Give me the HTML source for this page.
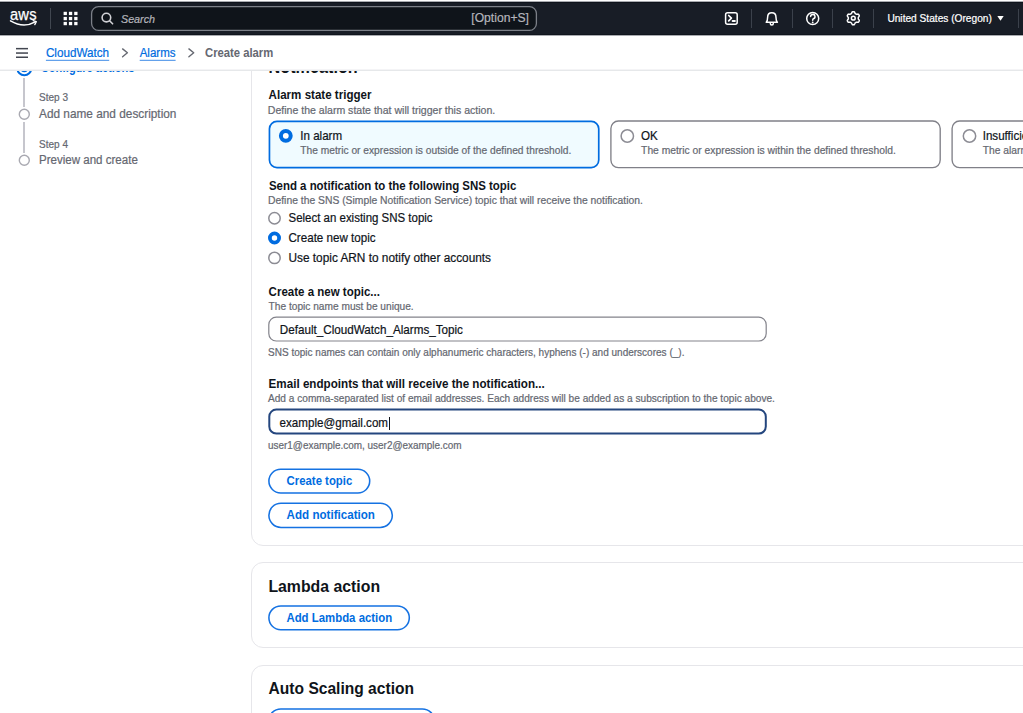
<!DOCTYPE html>
<html><head><meta charset="utf-8">
<style>
html,body{margin:0;padding:0;}
body{width:1023px;height:713px;overflow:hidden;position:relative;background:#fff;font-family:"Liberation Sans",sans-serif;}
.a{position:absolute;box-sizing:border-box;}
.t{position:absolute;white-space:pre;}
#nav{position:absolute;left:0;top:1px;width:1023px;height:35px;background:#181d26;
 box-shadow: inset 0 1px 0 #a9abb0, inset 0 2px 0 #0e131b, inset 0 -1px 0 #a9abb0, inset 0 -2px 0 #10151d;}
.sep{position:absolute;width:1px;background:#3b414b;}
.radio{position:absolute;box-sizing:border-box;border-radius:50%;}
.btn{position:absolute;box-sizing:border-box;border:1.6px solid #006ce0;border-radius:20px;}
.cont{position:absolute;box-sizing:border-box;border:1px solid #e6e6ea;border-radius:12px;background:#fff;}
.step-line{position:absolute;width:2px;background:#c6c6cd;}
</style></head><body>

<!-- containers -->
<div class="cont" style="left:251px;top:20px;width:900px;height:526px;"></div>
<div class="cont" style="left:251px;top:562px;width:900px;height:86px;"></div>
<div class="cont" style="left:251px;top:665px;width:900px;height:200px;"></div>

<!-- tiles -->
<svg style="position:absolute;left:0;top:0" width="1023" height="713" viewBox="0 0 1023 713">
 <rect x="269.45" y="121.35" width="329.3" height="46.2" rx="7.5" fill="#f0fbff" stroke="#006ce0" stroke-width="1.7"/>
 <rect x="610.9" y="121" width="329.3" height="46.6" rx="7.5" fill="none" stroke="#808088" stroke-width="1.35"/>
 <rect x="952.1" y="121" width="329.3" height="46.6" rx="7.5" fill="none" stroke="#808088" stroke-width="1.35"/>
</svg>



<!-- inputs -->
<svg style="position:absolute;left:0;top:0" width="1023" height="713" viewBox="0 0 1023 713">
 <rect x="268.8" y="317.2" width="497.4" height="23.8" rx="7.5" fill="none" stroke="#83838b" stroke-width="1.2"/>
 <rect x="269.3" y="409.6" width="496.5" height="24" rx="7" fill="none" stroke="#24467e" stroke-width="2"/>
 <rect x="389" y="417" width="1" height="13" fill="#0f141a"/>
</svg>

<!-- buttons -->
<svg style="position:absolute;left:0;top:0" width="1023" height="713" viewBox="0 0 1023 713">
 <g fill="none" stroke="#1572e2" stroke-width="1.55">
  <rect x="268.9" y="469.3" width="100.8" height="23.6" rx="11.8"/>
  <rect x="268.9" y="503.2" width="123.4" height="24.2" rx="12.1"/>
  <rect x="268.9" y="605.9" width="140.4" height="23.8" rx="11.9"/>
  <rect x="268.9" y="708.9" width="165.4" height="23.8" rx="11.9"/>
 </g>
</svg>

<!-- left nav steps -->
<svg style="position:absolute;left:0;top:0" width="1023" height="713" viewBox="0 0 1023 713">
 <!-- tile radios -->
 <circle cx="285.8" cy="135.8" r="4.9" fill="#fff" stroke="#006ce0" stroke-width="4"/>
 <circle cx="627.3" cy="136" r="6.2" fill="none" stroke="#8c8c94" stroke-width="1.5"/>
 <circle cx="969.5" cy="136" r="6.2" fill="none" stroke="#8c8c94" stroke-width="1.5"/>
 <!-- sns radios -->
 <circle cx="274.5" cy="218.2" r="5.7" fill="none" stroke="#8c8c94" stroke-width="1.5"/>
 <circle cx="274.5" cy="238" r="4.6" fill="#fff" stroke="#006ce0" stroke-width="3.8"/>
 <circle cx="274.5" cy="257.9" r="5.7" fill="none" stroke="#8c8c94" stroke-width="1.5"/>
 <!-- steps -->
 <circle cx="24.3" cy="114.3" r="5" fill="none" stroke="#a9a9b1" stroke-width="1.4"/>
 <circle cx="24.3" cy="160.2" r="5" fill="none" stroke="#a9a9b1" stroke-width="1.4"/>
 <circle cx="24.3" cy="68.4" r="6.9" fill="none" stroke="#006ce0" stroke-width="2"/>
 <circle cx="24.3" cy="68.4" r="3.8" fill="#006ce0"/>
</svg>

<div class="step-line" style="left:23.3px;top:78px;height:29px;"></div>
<div class="step-line" style="left:23.3px;top:122px;height:30.5px;"></div>

<div class="t" style="left:40.80px;top:63.00px;font-size:11.011px;line-height:11.011px;font-weight:700;color:#006ce0;transform:scaleY(1.1);transform-origin:0 9px;">Configure actions</div>
<div class="t" style="left:39.00px;top:93.00px;font-size:10.030px;line-height:10.030px;font-weight:400;color:#656871;transform:scaleY(1.1);transform-origin:0 8px;-webkit-text-stroke:0.2px #656871;">Step 3</div>
<div class="t" style="left:39.00px;top:109.00px;font-size:11.834px;line-height:11.834px;font-weight:400;color:#656871;transform:scaleY(1.1);transform-origin:0 9px;-webkit-text-stroke:0.2px #656871;">Add name and description</div>
<div class="t" style="left:39.00px;top:140.00px;font-size:10.030px;line-height:10.030px;font-weight:400;color:#656871;transform:scaleY(1.1);transform-origin:0 8px;-webkit-text-stroke:0.2px #656871;">Step 4</div>
<div class="t" style="left:39.00px;top:155.00px;font-size:11.565px;line-height:11.565px;font-weight:400;color:#656871;transform:scaleY(1.1);transform-origin:0 9px;-webkit-text-stroke:0.2px #656871;">Preview and create</div>
<div class="t" style="left:268.60px;top:59.00px;font-size:16.220px;line-height:16.220px;font-weight:700;color:#0f141a;transform:scaleY(1.1);transform-origin:0 14px;">Notification</div>
<div class="t" style="left:268.60px;top:90.00px;font-size:11.584px;line-height:11.584px;font-weight:700;color:#0f141a;transform:scaleY(1.1);transform-origin:0 9px;">Alarm state trigger</div>
<div class="t" style="left:267.80px;top:105.00px;font-size:10.554px;line-height:10.554px;font-weight:400;color:#656871;transform:scaleY(1.1);transform-origin:0 9px;-webkit-text-stroke:0.2px #656871;">Define the alarm state that will trigger this action.</div>
<div class="t" style="left:300.30px;top:131.00px;font-size:11.599px;line-height:11.599px;font-weight:400;color:#0f141a;transform:scaleY(1.1);transform-origin:0 9px;-webkit-text-stroke:0.2px #0f141a;">In alarm</div>
<div class="t" style="left:300.30px;top:146.00px;font-size:10.228px;line-height:10.228px;font-weight:400;color:#656871;transform:scaleY(1.1);transform-origin:0 8px;-webkit-text-stroke:0.2px #656871;">The metric or expression is outside of the defined threshold.</div>
<div class="t" style="left:641.10px;top:130.00px;font-size:11.600px;line-height:11.600px;font-weight:400;color:#0f141a;transform:scaleY(1.1);transform-origin:0 10px;-webkit-text-stroke:0.2px #0f141a;">OK</div>
<div class="t" style="left:641.10px;top:146.00px;font-size:10.318px;line-height:10.318px;font-weight:400;color:#656871;transform:scaleY(1.1);transform-origin:0 8px;-webkit-text-stroke:0.2px #656871;">The metric or expression is within the defined threshold.</div>
<div class="t" style="left:982.70px;top:130.00px;font-size:11.600px;line-height:11.600px;font-weight:400;color:#0f141a;transform:scaleY(1.1);transform-origin:0 10px;-webkit-text-stroke:0.2px #0f141a;">Insufficient data</div>
<div class="t" style="left:982.70px;top:146.00px;font-size:10.300px;line-height:10.300px;font-weight:400;color:#656871;transform:scaleY(1.1);transform-origin:0 8px;-webkit-text-stroke:0.2px #656871;">The alarm does not have enough data.</div>
<div class="t" style="left:268.90px;top:181.00px;font-size:11.467px;line-height:11.467px;font-weight:700;color:#0f141a;transform:scaleY(1.1);transform-origin:0 9px;">Send a notification to the following SNS topic</div>
<div class="t" style="left:268.00px;top:196.00px;font-size:10.354px;line-height:10.354px;font-weight:400;color:#656871;transform:scaleY(1.1);transform-origin:0 8px;-webkit-text-stroke:0.2px #656871;">Define the SNS (Simple Notification Service) topic that will receive the notification.</div>
<div class="t" style="left:288.50px;top:213.00px;font-size:11.487px;line-height:11.487px;font-weight:400;color:#0f141a;transform:scaleY(1.1);transform-origin:0 9px;-webkit-text-stroke:0.2px #0f141a;">Select an existing SNS topic</div>
<div class="t" style="left:288.50px;top:232.00px;font-size:11.607px;line-height:11.607px;font-weight:400;color:#0f141a;transform:scaleY(1.1);transform-origin:0 10px;-webkit-text-stroke:0.2px #0f141a;">Create new topic</div>
<div class="t" style="left:288.50px;top:253.00px;font-size:11.846px;line-height:11.846px;font-weight:400;color:#0f141a;transform:scaleY(1.1);transform-origin:0 9px;-webkit-text-stroke:0.2px #0f141a;">Use topic ARN to notify other accounts</div>
<div class="t" style="left:268.60px;top:287.00px;font-size:11.521px;line-height:11.521px;font-weight:700;color:#0f141a;transform:scaleY(1.1);transform-origin:0 9px;">Create a new topic...</div>
<div class="t" style="left:268.60px;top:302.00px;font-size:10.164px;line-height:10.164px;font-weight:400;color:#656871;transform:scaleY(1.1);transform-origin:0 8px;-webkit-text-stroke:0.2px #656871;">The topic name must be unique.</div>
<div class="t" style="left:279.80px;top:324.00px;font-size:11.687px;line-height:11.687px;font-weight:400;color:#0f141a;transform:scaleY(1.1);transform-origin:0 10px;-webkit-text-stroke:0.2px #0f141a;">Default_CloudWatch_Alarms_Topic</div>
<div class="t" style="left:268.00px;top:348.00px;font-size:10.030px;line-height:10.030px;font-weight:400;color:#656871;transform:scaleY(1.1);transform-origin:0 8px;-webkit-text-stroke:0.2px #656871;">SNS topic names can contain only alphanumeric characters, hyphens (-) and underscores (_).</div>
<div class="t" style="left:268.60px;top:378.00px;font-size:11.650px;line-height:11.650px;font-weight:700;color:#0f141a;transform:scaleY(1.1);transform-origin:0 10px;">Email endpoints that will receive the notification...</div>
<div class="t" style="left:268.00px;top:394.00px;font-size:10.112px;line-height:10.112px;font-weight:400;color:#656871;transform:scaleY(1.1);transform-origin:0 8px;-webkit-text-stroke:0.2px #656871;">Add a comma-separated list of email addresses. Each address will be added as a subscription to the topic above.</div>
<div class="t" style="left:279.60px;top:417.00px;font-size:11.602px;line-height:11.602px;font-weight:400;color:#0f141a;transform:scaleY(1.1);transform-origin:0 10px;-webkit-text-stroke:0.2px #0f141a;">example@gmail.com</div>
<div class="t" style="left:268.00px;top:441.00px;font-size:9.958px;line-height:9.958px;font-weight:400;color:#656871;transform:scaleY(1.1);transform-origin:0 8px;-webkit-text-stroke:0.2px #656871;">user1@example.com, user2@example.com</div>
<div class="t" style="left:286.60px;top:476.00px;font-size:11.368px;line-height:11.368px;font-weight:700;color:#006ce0;transform:scaleY(1.1);transform-origin:0 9px;">Create topic</div>
<div class="t" style="left:286.60px;top:509.00px;font-size:11.616px;line-height:11.616px;font-weight:700;color:#006ce0;transform:scaleY(1.1);transform-origin:0 10px;">Add notification</div>
<div class="t" style="left:268.40px;top:579.00px;font-size:15.843px;line-height:15.843px;font-weight:700;color:#0f141a;transform:scaleY(1.1);transform-origin:0 13px;">Lambda action</div>
<div class="t" style="left:286.40px;top:613.00px;font-size:11.414px;line-height:11.414px;font-weight:700;color:#006ce0;transform:scaleY(1.1);transform-origin:0 9px;">Add Lambda action</div>
<div class="t" style="left:268.60px;top:681.00px;font-size:15.599px;line-height:15.599px;font-weight:700;color:#0f141a;transform:scaleY(1.1);transform-origin:0 13px;">Auto Scaling action</div>
<div class="t" style="left:286.40px;top:715.00px;font-size:11.400px;line-height:11.400px;font-weight:700;color:#006ce0;transform:scaleY(1.1);transform-origin:0 9px;">Add Auto Scaling action</div>

<!-- breadcrumb bar (covers content) -->
<div class="a" style="left:0;top:36px;width:1023px;height:34px;background:#fff;"></div>
<div class="a" style="left:0;top:69px;width:1023px;height:1px;background:#f4f4f6;"></div>
<div class="a" style="left:0;top:70px;width:1023px;height:1px;background:#e6e8ea;"></div>

<svg style="position:absolute;left:0;top:0" width="300" height="70" viewBox="0 0 300 70">
 <g fill="#424650"><rect x="16" y="47.9" width="12" height="1.5"/><rect x="16" y="52.3" width="12" height="1.5"/><rect x="16" y="56.5" width="12" height="1.5"/></g>
 <g fill="none" stroke="#656871" stroke-width="1.4" stroke-linecap="round" stroke-linejoin="round">
  <path d="M122.6 48.9 L127.4 52.8 L122.6 56.7"/>
  <path d="M188.9 48.9 L193.7 52.8 L188.9 56.7"/>
 </g>
 <rect x="45.9" y="59.8" width="63.3" height="1" fill="#3d8ae6"/>
 <rect x="139.7" y="59.8" width="35.9" height="1" fill="#3d8ae6"/>
</svg>

<div class="t" style="left:45.90px;top:47.00px;font-size:11.701px;line-height:11.701px;font-weight:400;color:#006ce0;transform:scaleY(1.1);transform-origin:0 10px;-webkit-text-stroke:0.2px #006ce0;">CloudWatch</div>
<div class="t" style="left:139.70px;top:48.00px;font-size:11.538px;line-height:11.538px;font-weight:400;color:#006ce0;transform:scaleY(1.1);transform-origin:0 9px;-webkit-text-stroke:0.2px #006ce0;">Alarms</div>
<div class="t" style="left:205.00px;top:48.00px;font-size:11.289px;line-height:11.289px;font-weight:700;color:#656871;transform:scaleY(1.1);transform-origin:0 9px;">Create alarm</div>

<!-- nav -->
<div id="nav"></div>

<svg class="a" style="left:0;top:0;" width="1023" height="36" viewBox="0 0 1023 36">
 <g fill="none" stroke="#ffffff" stroke-linecap="round" stroke-linejoin="round">
  <path d="M10.5 20.8 Q23.5 28.5 35.3 21.8" stroke-width="1.5"/>
  <path d="M33.2 20.6 L36.3 21.6 L34.8 24.6" stroke-width="1.3"/>
 </g>
 <rect x="50" y="8" width="1" height="21" fill="#414750"/>
 <g fill="#ffffff">
  <rect x="63.6" y="11.8" width="3.3" height="3.3"/><rect x="68.9" y="11.8" width="3.3" height="3.3"/><rect x="74.2" y="11.8" width="3.3" height="3.3"/>
  <rect x="63.6" y="16.9" width="3.3" height="3.3"/><rect x="68.9" y="16.9" width="3.3" height="3.3"/><rect x="74.2" y="16.9" width="3.3" height="3.3"/>
  <rect x="63.6" y="21.9" width="3.3" height="3.3"/><rect x="68.9" y="21.9" width="3.3" height="3.3"/><rect x="74.2" y="21.9" width="3.3" height="3.3"/>
 </g>
 <rect x="91.6" y="6.6" width="444.8" height="23.8" rx="7" ry="7" fill="#0f141a" stroke="#7c8088" stroke-width="1.3"/>
 <g fill="none" stroke="#d1d1d5" stroke-width="1.6" stroke-linecap="round">
  <circle cx="106.4" cy="17.6" r="4.3"/>
  <path d="M109.6 20.8 L112.6 23.8"/>
 </g>
 <g fill="#3b414b">
  <rect x="751" y="9" width="1" height="19"/><rect x="792" y="9" width="1" height="19"/>
  <rect x="832" y="9" width="1" height="19"/><rect x="873" y="9" width="1" height="19"/><rect x="1018" y="9" width="1" height="19"/>
 </g>
 <g fill="none" stroke="#ffffff" stroke-width="1.5" stroke-linecap="round" stroke-linejoin="round">
  <rect x="725.6" y="12.7" width="11.6" height="11.6" rx="2"/>
  <path d="M728.7 15.5 L731.4 18.2 L728.7 20.9" stroke-width="1.7"/>
  <path d="M732.6 21.1 L734.9 21.1" stroke-width="2"/>
  <path d="M766.2 22.2 C767.6 21 767.6 19.6 767.6 17.4 C767.6 14.3 769.4 12.7 771.8 12.7 C774.2 12.7 776 14.3 776 17.4 C776 19.6 776 21 777.4 22.2 Z"/>
  <path d="M770.3 23.4 A1.5 1.5 0 0 0 773.3 23.4"/>
  <circle cx="812.7" cy="18.5" r="6"/>
  <path d="M810.6 16.6 A2.2 2.2 0 1 1 813.4 18.7 Q812.7 19.2 812.7 20.2"/>
  <path d="M853.30 11.70 L853.73 11.71 L854.15 11.76 L854.51 12.14 L854.79 12.65 L855.01 13.16 L855.21 13.58 L855.51 13.72 L855.80 13.87 L856.08 14.04 L856.34 14.23 L856.81 14.20 L857.37 14.13 L857.95 14.12 L858.46 14.24 L858.70 14.59 L858.93 14.95 L859.13 15.33 L859.31 15.71 L859.15 16.21 L858.85 16.71 L858.52 17.16 L858.26 17.55 L858.29 17.87 L858.30 18.20 L858.29 18.53 L858.26 18.85 L858.52 19.24 L858.85 19.69 L859.15 20.19 L859.31 20.69 L859.13 21.07 L858.93 21.45 L858.70 21.81 L858.46 22.16 L857.95 22.28 L857.37 22.27 L856.81 22.20 L856.34 22.17 L856.08 22.36 L855.80 22.53 L855.51 22.68 L855.21 22.82 L855.01 23.24 L854.79 23.75 L854.51 24.26 L854.15 24.64 L853.73 24.69 L853.30 24.70 L852.87 24.69 L852.45 24.64 L852.09 24.26 L851.81 23.75 L851.59 23.24 L851.39 22.82 L851.09 22.68 L850.80 22.53 L850.52 22.36 L850.26 22.17 L849.79 22.20 L849.23 22.27 L848.65 22.28 L848.14 22.16 L847.90 21.81 L847.67 21.45 L847.47 21.07 L847.29 20.69 L847.45 20.19 L847.75 19.69 L848.08 19.24 L848.34 18.85 L848.31 18.53 L848.30 18.20 L848.31 17.87 L848.34 17.55 L848.08 17.16 L847.75 16.71 L847.45 16.21 L847.29 15.71 L847.47 15.33 L847.67 14.95 L847.90 14.59 L848.14 14.24 L848.65 14.12 L849.23 14.13 L849.79 14.20 L850.26 14.23 L850.52 14.04 L850.80 13.87 L851.09 13.72 L851.39 13.58 L851.59 13.16 L851.81 12.65 L852.09 12.14 L852.45 11.76 L852.87 11.71 Z"/>
  <circle cx="853.3" cy="18.2" r="1.9"/>
 </g>
 <circle cx="812.7" cy="22.4" r="0.9" fill="#fff"/>
 <polygon points="997.3,16 1003.7,16 1000.5,20.8" fill="#ffffff"/>
</svg>
<div class="t" style="left:10px;top:6.5px;font-size:16px;line-height:16px;color:#fff;transform:scaleX(0.92);transform-origin:0 0;-webkit-text-stroke:0.25px #fff;letter-spacing:0.2px;">aws</div>
<div class="t" style="left:121.00px;top:14.00px;font-size:10.730px;line-height:10.730px;font-weight:400;color:#b4b4bb;font-style:italic;transform:scaleY(1.1);transform-origin:0 9px;-webkit-text-stroke:0.2px #b4b4bb;">Search</div>
<div class="t" style="left:471.30px;top:12.00px;font-size:12.140px;line-height:12.140px;font-weight:400;color:#b4b4bb;transform:scaleY(1.1);transform-origin:0 10px;-webkit-text-stroke:0.2px #b4b4bb;">[Option+S]</div>
<div class="t" style="left:887.40px;top:14.00px;font-size:10.172px;line-height:10.172px;font-weight:400;color:#ffffff;transform:scaleY(1.1);transform-origin:0 8px;-webkit-text-stroke:0.2px #ffffff;">United States (Oregon)</div>

</body></html>
